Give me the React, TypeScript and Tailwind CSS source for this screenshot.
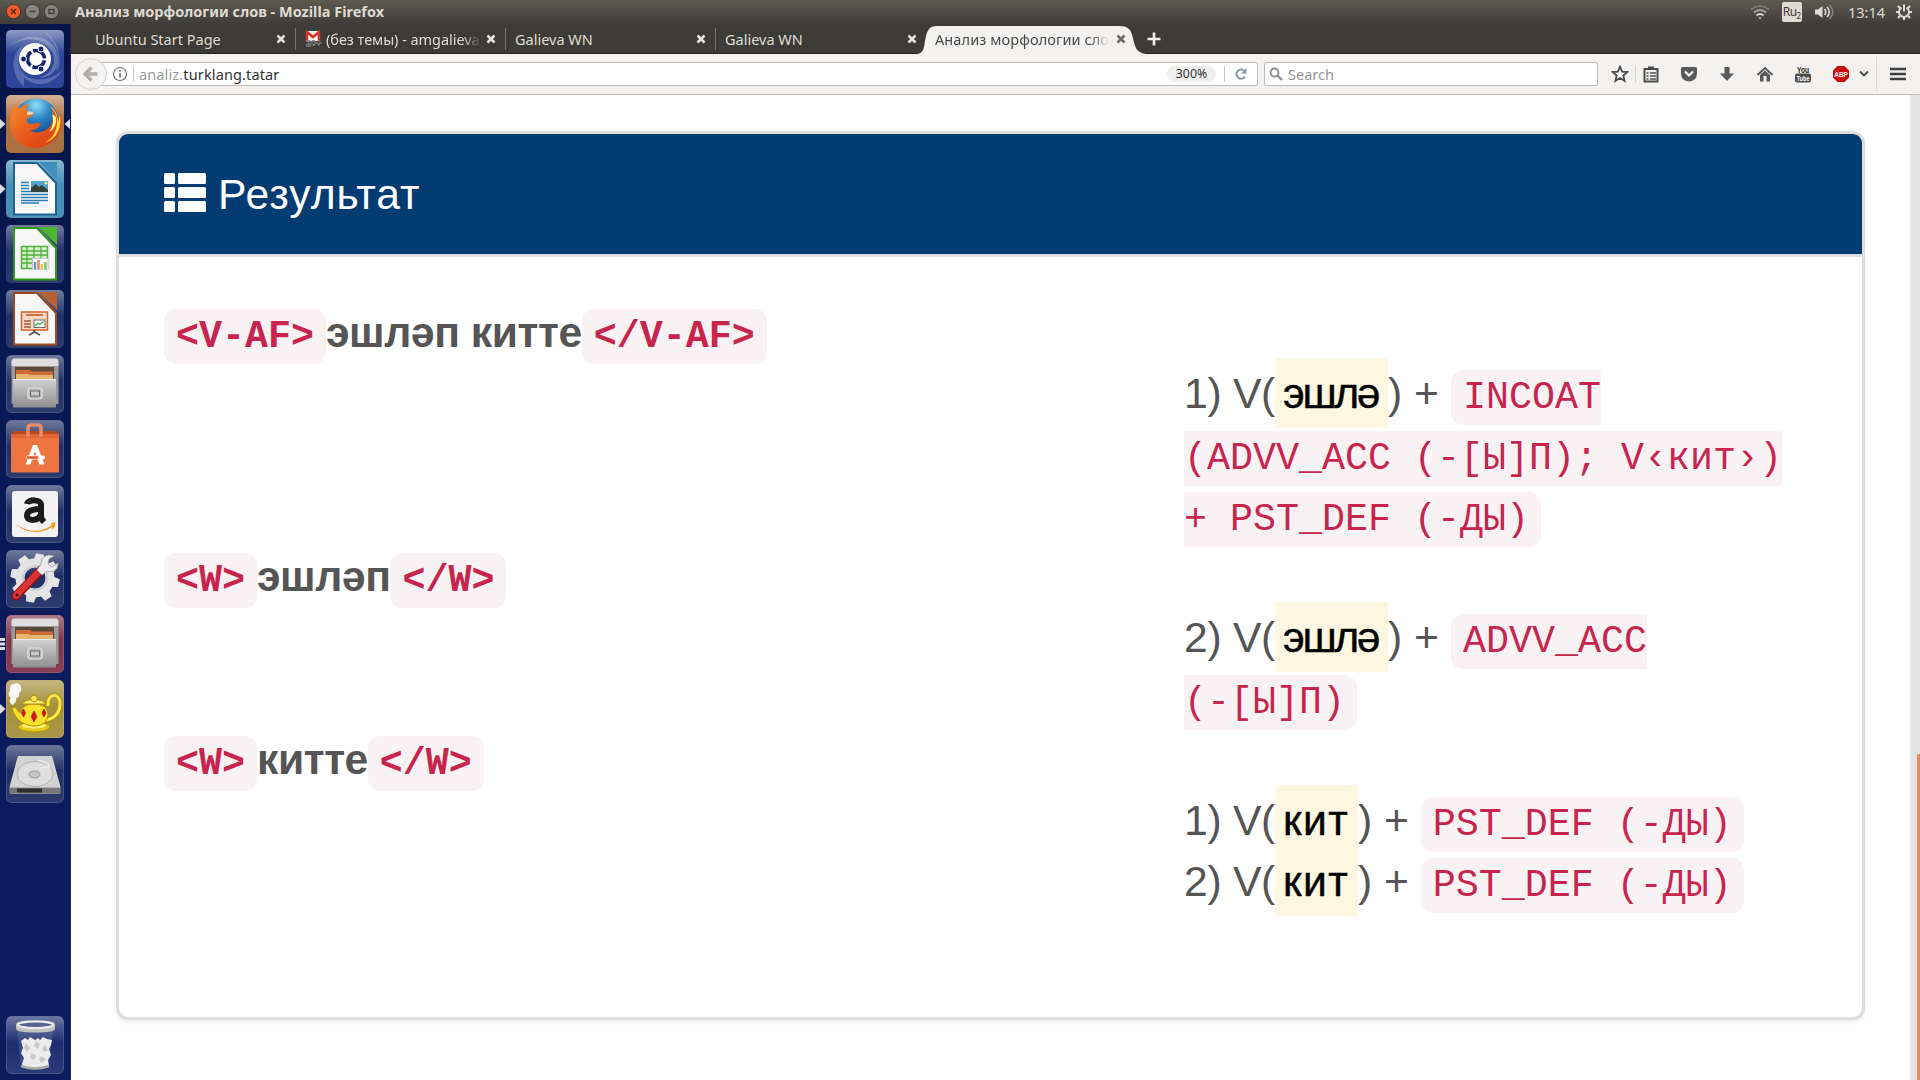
import React from "react";

function Star() {
  return (
    <svg width="18" height="18" viewBox="0 0 18 18" className="shrink-0">
      <path d="M9 1.6l2.1 5 5.3.4-4.1 3.5 1.3 5.3L9 13l-4.6 2.8 1.3-5.3L1.600 7l5.300-.4z" fill="none" stroke="#4c4c4c" strokeWidth="1.8" />
    </svg>
  );
}

function DashIcon() {
  return (
    <svg viewBox="0 0 58 58" className="size-full">
      <defs>
        <linearGradient id="dash" x1="0" y1="0" x2="0" y2="1">
          <stop offset="0" stopColor="#8f9ac4" />
          <stop offset=".4" stopColor="#2d4597" />
          <stop offset="1" stopColor="#2c469c" />
        </linearGradient>
      </defs>
      <rect width="58" height="58" rx="5" fill="url(#dash)" />
      <path d="M2 17C20 4 40 8 47 24c4 12-4 22-16 24C48 48 56 36 50 20 44 6 22 0 2 17z" fill="#fff" opacity=".25" />
      <path d="M18 57C4 44 4 24 18 15 10 26 10 40 22 47c12 5 26 2 35-8C48 56 30 58 18 48z" fill="#fff" opacity=".2" />
      <path d="M39 2c12 10 17 24 12 38" fill="none" stroke="#fff" opacity=".2" strokeWidth="1.500" />
      <circle cx="29" cy="29" r="16" fill="#fff" />
      <circle cx="30" cy="29" r="8.500" fill="none" stroke="#14246b" strokeWidth="3.600" strokeDasharray="15.600 2.200" strokeDashoffset="-1.200" />
      <g fill="#14246b" stroke="#fff" strokeWidth="1">
        <circle cx="17.500" cy="29" r="3" />
        <circle cx="35" cy="19" r="3" />
        <circle cx="35" cy="39" r="3" />
      </g>
    </svg>
  );
}

function FirefoxIcon() {
  return (
    <svg viewBox="0 0 58 58" className="size-full">
      <defs>
        <linearGradient id="fxbg" x1="0" y1="0" x2="0" y2="1">
          <stop offset="0" stopColor="#d6b197" />
          <stop offset=".4" stopColor="#b07448" />
          <stop offset="1" stopColor="#a9703f" />
        </linearGradient>
        <radialGradient id="globe" cx=".5" cy=".15" r=".8">
          <stop offset="0" stopColor="#8fe0f5" />
          <stop offset=".4" stopColor="#2b84c4" />
          <stop offset="1" stopColor="#0f3a78" />
        </radialGradient>
        <linearGradient id="fox" x1="0" y1="0" x2="1" y2="1">
          <stop offset="0" stopColor="#f58a2c" />
          <stop offset=".5" stopColor="#ea5a1c" />
          <stop offset="1" stopColor="#d8380f" />
        </linearGradient>
      </defs>
      <rect width="58" height="58" rx="5" fill="url(#fxbg)" />
      <circle cx="30" cy="26" r="22.500" fill="url(#globe)" />
      <path d="M7 13c0-2 .5-3 1-4 1 2 3 4 6 4 3-3 6-4 9-4-2 2-3 4-2 7 2 1 5 1 7 2-1 3-5 4-7 6-1 3 1 5 4 5 4 0 6-3 10 0-3 5-7 7-12 6 8 5 19 2 23-7 2-6 1-11-2-17 5 4 8 10 8 17 3-4 2-10-1-15 6 8 6 21 0 29C45 50 36 53 28 53 14 52 4 42 4 29c0-6 1-12 3-16z" fill="url(#fox)" />
      <path d="M44 11c5 5 8 11 7 18-1 9-6 16-13 19 13-3 18-16 16-28-1 3-1 5-2 7 0-7-3-13-8-16z" fill="#fbdc3c" />
      <path d="M46 19c2 6 1 13-3 18 5-2 8-8 7-15z" fill="#fff08a" />
      <path d="M21 17c3-1 5 0 7 1-2 2-4 2-7 2z" fill="#f9d7b5" />
    </svg>
  );
}

function DocIcon({ kind }: { kind: "writer" | "calc" | "impress" }) {
  const c =
    kind === "writer"
      ? { bg: "#3c86b0", edge: "#1c6493", tri: "#3f8fbf" }
      : kind === "calc"
        ? { bg: "#16265f", edge: "#2f9a17", tri: "#4cb82e" }
        : { bg: "#16265f", edge: "#a0491b", tri: "#b8622f" };
  return (
    <svg viewBox="0 0 58 58" className="size-full">
      <defs>
        <linearGradient id={"doc" + kind} x1="0" y1="0" x2="0" y2="1">
          <stop offset="0" stopColor="#fff" stopOpacity=".4" />
          <stop offset=".45" stopColor="#fff" stopOpacity=".05" />
          <stop offset="1" stopColor="#fff" stopOpacity=".1" />
        </linearGradient>
      </defs>
      <rect width="58" height="58" rx="5" fill={c.bg} />
      <rect width="58" height="58" rx="5" fill={"url(#doc" + kind + ")"} />
      <path d="M33 2h18v18z" fill={c.tri} />
      <path d="M8 3h23l19 20v31.500H8z" fill="#f7f7f7" stroke={c.edge} strokeWidth="2" />
      {kind === "writer" && (
        <g>
          <path d="M15 22.500h8M15 25.500h8M15 28.500h8M15 31.500h27M15 34.500h27M15 37.500h27M15 40.500h27M15 43h18" stroke="#2a7fb5" strokeWidth="1.500" />
          <rect x="25" y="21" width="17" height="11" fill="#4fa3d3" />
          <path d="M25 32v-4l5-4 3 3 3-2 6 5v2z" fill="#34443a" />
          <circle cx="40" cy="23" r="1.500" fill="#ffe36e" />
        </g>
      )}
      {kind === "calc" && (
        <g>
          <rect x="15.500" y="21.500" width="26" height="22" fill="#d8f0cf" stroke="#4fb13a" strokeWidth="1.500" />
          <path d="M15 26h26M15 30h26M15 34h26M15 38h26M21 21v22M28 21v22M35 21v22" stroke="#4fb13a" strokeWidth="1.300" />
          <rect x="26.500" y="33.500" width="15.500" height="11" fill="#fff" stroke="#c9c9c9" />
          <path d="M29 44v-7" stroke="#5b9bd5" strokeWidth="2.500" />
          <path d="M32.500 44v-9" stroke="#e58b5a" strokeWidth="2.500" />
          <path d="M36 44v-5" stroke="#f3c63a" strokeWidth="2.500" />
          <path d="M39.500 44v-7" stroke="#7cc36a" strokeWidth="2.500" />
        </g>
      )}
      {kind === "impress" && (
        <g>
          <rect x="15.500" y="22" width="26" height="18" fill="#fbd8c2" stroke="#d2622f" strokeWidth="1.500" />
          <path d="M20 25h17" stroke="#c5501c" strokeWidth="1.500" />
          <path d="M18 31h7M18 34h7M18 37h7" stroke="#a35b3a" strokeWidth="1.500" />
          <rect x="28" y="30" width="11" height="7.500" fill="#fff" stroke="#6a6a6a" />
          <path d="M29 36l3-3 2 1.500 3.500-3" stroke="#3bae49" strokeWidth="1.300" fill="none" />
          <path d="M28.500 40v2M23 45l5.500-3 5.500 3" stroke="#555" strokeWidth="1.800" fill="none" />
        </g>
      )}
    </svg>
  );
}

function Glass({ id, base }: { id: string; base: string }) {
  return (
    <>
      <defs>
        <linearGradient id={id} x1="0" y1="0" x2="0" y2="1">
          <stop offset="0" stopColor="#fff" stopOpacity=".38" />
          <stop offset=".45" stopColor="#fff" stopOpacity=".04" />
          <stop offset="1" stopColor="#fff" stopOpacity=".1" />
        </linearGradient>
      </defs>
      <rect width="58" height="58" rx="5" fill={base} />
      <rect x=".5" y=".5" width="57" height="57" rx="5" fill={"url(#" + id + ")"} stroke="#fff" strokeOpacity=".18" />
    </>
  );
}

function FilesIcon({ id, base }: { id: string; base: string }) {
  return (
    <svg viewBox="0 0 58 58" className="size-full">
      <Glass id={id} base={base} />
      <defs>
        <linearGradient id={id + "d"} x1="0" y1="0" x2="0" y2="1">
          <stop offset="0" stopColor="#d2d2d2" />
          <stop offset="1" stopColor="#8f8f8f" />
        </linearGradient>
      </defs>
      <path d="M5.500 7q0-3.500 3-3.500h41q3 0 3 3.500v42h-47z" fill="#9a9a9a" />
      <path d="M5.500 11V7q0-3.500 3-3.500h41q3 0 3 3.500v4z" fill="#dedede" />
      <rect x="9" y="12" width="39" height="13" fill="#5b4a3c" />
      <path d="M10 15h14l2 1.500h21V25H10z" fill="#cf6a34" />
      <path d="M10 19h12l2 1h23v5H10z" fill="#e8b673" />
      <rect x="7" y="24" width="43" height="28.500" rx="1" fill={"url(#" + id + "d)"} />
      <path d="M7 24.500h43" stroke="#e8e8e8" />
      <rect x="22" y="33" width="14" height="11" rx="3" fill="#b7b7b7" stroke="#e6e6e6" strokeWidth="1.200" />
      <rect x="24.500" y="36" width="9" height="5" fill="#c9c9c9" stroke="#6c6c6c" />
    </svg>
  );
}

function SoftwareIcon() {
  return (
    <svg viewBox="0 0 58 58" className="size-full">
      <Glass id="soft" base="#16265f" />
      <path d="M5 14l3-3h42l3 3z" fill="#b84a20" />
      <rect x="5" y="14" width="48" height="38.500" rx="1" fill="#ee7440" />
      <path d="M5 14h48v4H5z" fill="#e0653a" />
      <path d="M22 17V8q0-3 3-3h7q3 0 3 3v9" fill="none" stroke="#e98a68" strokeWidth="3.600" />
      <path d="M19.500 44.500L27 25h4l7.500 19.500h-5L29 31.500l-4.500 13z" fill="#fff" />
      <rect x="20" y="35.500" width="19" height="4" rx="2" fill="#fff" />
      <rect x="20.500" y="36.300" width="12" height="2.400" rx="1" fill="#e0532a" />
    </svg>
  );
}

function AmazonIcon() {
  return (
    <svg viewBox="0 0 58 58" className="size-full">
      <Glass id="amz" base="#16265f" />
      <rect x="6" y="6" width="46" height="46" rx="3" fill="#f3f3f3" />
      <g fill="none" stroke="#1b1b1b" strokeWidth="6">
        <path d="M21 19c1-5 14-5 14 1v11c0 3 1 4 3 6" />
        <path d="M35 24c-8 0-14 1-14 6.500 0 6.500 12 5.500 14-1" />
      </g>
      <path d="M9 38c12 10 26 10 37 2l-1-2 4.500-1c0 3-1 6-3 8l-.5-3C34 50 18 48 9 38z" fill="#f79a1c" />
    </svg>
  );
}

const teeth = [0, 45, 90, 135, 180, 225, 270, 315];

function SettingsIcon() {
  return (
    <svg viewBox="0 0 58 58" className="size-full">
      <Glass id="cog" base="#16265f" />
      <g fill="#e4e4e4">
        {teeth.map((a) => (
          <path key={a} d="M23.500 12L25 3.500h8L34.500 12z" transform={"rotate(" + (a + 12) + " 29 28)"} />
        ))}
      </g>
      <circle cx="29" cy="28" r="15" fill="none" stroke="#e4e4e4" strokeWidth="9" />
      <circle cx="29" cy="28" r="12" fill="none" stroke="#cfcfcf" strokeWidth="2" />
      <path d="M10 46L35 20" stroke="#8d1212" strokeWidth="9" strokeLinecap="round" />
      <path d="M10 45.500L34 20.500" stroke="#dc3434" strokeWidth="6.500" strokeLinecap="round" />
      <path d="M31 20l5 5 5-4c5 2 11-1 11-8l-6 4-4-3 1-5 5-3c-8-3-13 2-13 8z" fill="#ececec" stroke="#9c9c9c" strokeWidth=".8" />
      <circle cx="11" cy="45" r="1.500" fill="#5c0b0b" />
    </svg>
  );
}

function TeapotIcon() {
  return (
    <svg viewBox="0 0 58 58" className="size-full">
      <Glass id="tea" base="#a08c35" />
      <path d="M7 25c-4-2-4-5-2-7-3-2-3-5-1-7-1-4 1-7 4-7 3-2 7 0 7 4 1 3-1 4-2 5 1 3-1 5-3 5 1 3-1 5-3 7z" fill="#fff" opacity=".93" />
      <ellipse cx="28" cy="47" rx="16" ry="5" fill="#e6c81d" stroke="#b38f07" />
      <ellipse cx="28" cy="45.500" rx="12" ry="3" fill="#fff27a" />
      <path d="M42 26c-1-14 12-13 12-3 0 8-3 15-14 17" fill="none" stroke="#b38f07" strokeWidth="4.500" />
      <path d="M42 26c-1-14 12-13 12-3 0 8-3 15-14 17" fill="none" stroke="#fbe84a" strokeWidth="3" />
      <path d="M6 28l4-1c1 4 3 5 5 6 0-5 4-9 13-9s14 4 14 10c0 8-6 12-14 12-8 0-19-5-22-18z" fill="#f9e02a" stroke="#b38f07" />
      <path d="M16 24c3-6 21-6 24 0z" fill="#fff07a" stroke="#b38f07" />
      <circle cx="28" cy="18.500" r="3.300" fill="#fbe84a" stroke="#b38f07" />
      <g fill="#d4161f" stroke="#8e0c12" strokeWidth=".6">
        <path d="M28 31l2.800 5.500L28 42l-2.800-5.500z" />
        <path d="M17.500 29l2 4-2 4-2-4z" />
        <path d="M38 29l2 4-2 4-2-4z" />
      </g>
    </svg>
  );
}

function DiskIcon() {
  return (
    <svg viewBox="0 0 58 58" className="size-full">
      <Glass id="disk" base="#16265f" />
      <path d="M12 11h34l8.500 31v5.500q0 1.500-2 1.500h-47q-2 0-2-1.500V42z" fill="#8b8b8b" />
      <path d="M12 11h34l8.500 31.500h-51z" fill="#d3d3d3" />
      <ellipse cx="29" cy="29" rx="18" ry="12.500" fill="#dedede" stroke="#b0b0b0" />
      <path d="M32 15c8 2 12 5 11 8-3-2-7-1-9 2" fill="none" stroke="#efefef" strokeWidth="1.500" />
      <ellipse cx="28.500" cy="29.500" rx="5.500" ry="3.500" fill="#c4c4c4" stroke="#909090" />
      <path d="M4 43h50v5H4z" fill="#777" />
      <path d="M11 43.500h25v4H11z" fill="#2d2d2d" />
    </svg>
  );
}

function TrashIcon() {
  return (
    <svg viewBox="0 0 58 58" className="size-full">
      <Glass id="bin" base="#13256b" />
      <path d="M11 14h36l-4 36q-14 5-28 0z" fill="#9aa4c8" opacity=".2" />
      <path d="M15 25l4-3 3 2 2-3 5 3 3-2 2 2 3-3 4 2 5 1-1 5-2 4 2 6-3 5 1 7q-13 4-25 0l-2-3 2-6-3-5 2-5z" fill="#ececec" />
      <g fill="#c9c9c4">
        <path d="M20 27l4 5-3 4-3-4zM30 25l4 3-2 5-4-3zM39 29l3 5-4 2-2-4zM25 37l5 2-2 5-4-2zM35 40l5 3-4 4-3-3z" />
      </g>
      <path d="M15 50q14 5 28 0" fill="none" stroke="#a9ada4" strokeWidth="2.500" />
      <path d="M10 8.500q0-4 19.500-4T49 8.500v4q0 4-19.500 4T10 12.500z" fill="#c4c4bf" />
      <ellipse cx="29.500" cy="8.700" rx="17.500" ry="3.200" fill="#55618f" stroke="#ececea" strokeWidth="2" />
    </svg>
  );
}

function Marker({ side }: { side: "left" | "right" }) {
  return side === "left" ? (
    <svg width="6" height="10" viewBox="0 0 6 10" className="absolute top-6 -left-1.5">
      <path d="M0 0l5.500 5L0 10z" fill="#dcdcdc" />
    </svg>
  ) : (
    <svg width="6" height="10" viewBox="0 0 6 10" className="absolute top-6 -right-1.5">
      <path d="M6 0L.5 5 6 10z" fill="#dcdcdc" />
    </svg>
  );
}

function Tile({ children }: { children: React.ReactNode }) {
  return <div className="relative size-[58px] shrink-0">{children}</div>;
}

function Launcher() {
  return (
    <aside className="flex w-[71px] shrink-0 flex-col gap-[7px] border-r border-[#2b2350] bg-linear-to-b from-[#061548] to-[#0b1b5d] to-60% pt-1.5 pb-1.5 pl-1.5">
      <Tile><DashIcon /></Tile>
      <Tile><FirefoxIcon /><Marker side="left" /><Marker side="right" /></Tile>
      <Tile><DocIcon kind="writer" /><Marker side="left" /></Tile>
      <Tile><DocIcon kind="calc" /></Tile>
      <Tile><DocIcon kind="impress" /></Tile>
      <Tile><FilesIcon id="files1" base="#16265f" /></Tile>
      <Tile><SoftwareIcon /></Tile>
      <Tile><AmazonIcon /></Tile>
      <Tile><SettingsIcon /></Tile>
      <Tile>
        <FilesIcon id="files2" base="#7a2a42" />
        <svg width="5" height="12" viewBox="0 0 5 12" className="absolute top-[23px] -left-1.5">
          <path d="M0 1.500h5M0 6h5M0 10.500h5" stroke="#dcdcdc" strokeWidth="2.800" />
        </svg>
      </Tile>
      <Tile><TeapotIcon /><Marker side="left" /></Tile>
      <Tile><DiskIcon /></Tile>
      <div className="mt-auto size-[58px]"><TrashIcon /></div>
    </aside>
  );
}

function TopBar() {
  return (
    <header className="flex h-6 shrink-0 items-center bg-linear-to-b from-[#5d5a50] to-[#3e3d39] pl-[5px] text-[14.5px] leading-none text-[#dfdbd2]">
      <svg width="56" height="24" viewBox="0 0 56 24">
        <circle cx="8.500" cy="11.500" r="7.200" fill="#ea5a2c" stroke="#3a2a22" strokeWidth=".8" />
        <path d="M6 9l5 5M11 9l-5 5" stroke="#5a2413" strokeWidth="1.400" />
        <circle cx="27.500" cy="11.500" r="7.200" fill="#85837b" stroke="#33322e" strokeWidth=".8" />
        <path d="M24.500 11.500h6" stroke="#3b3a36" strokeWidth="1.400" />
        <circle cx="46.500" cy="11.500" r="7.200" fill="#85837b" stroke="#33322e" strokeWidth=".8" />
        <rect x="44" y="9.500" width="5" height="4" fill="none" stroke="#3b3a36" strokeWidth="1.300" />
      </svg>
      <span className="ml-3.5 pb-px font-bold whitespace-pre">Анализ морфологии слов - Mozilla Firefox</span>
      <svg width="22" height="20" viewBox="0 0 22 20" className="ml-auto shrink-0" fill="none" strokeWidth="1.700">
        <path d="M2 7.500q9-7 18 0" stroke="#85827a" />
        <path d="M4.800 10.500q6.200-5 12.400 0" stroke="#aaa79f" />
        <path d="M7.500 13.500q3.500-3 7 0" stroke="#dfdbd2" />
        <path d="M9.500 15.500h3L11 17.500z" fill="#dfdbd2" />
      </svg>
      <div className="ml-[11px] flex h-5 w-5 items-center justify-center rounded-[2px] bg-[#dfdbd2] text-[#3c3b37]">
        <span className="text-[12px] tracking-[-0.5px]">Ru</span>
        <span className="pt-2 text-[8px]">2</span>
      </div>
      <svg width="22" height="20" viewBox="0 0 22 20" className="ml-3 shrink-0" fill="none" strokeWidth="1.600">
        <path d="M1 7.500h3L8.500 4v12L4 12.500H1z" fill="#dfdbd2" />
        <path d="M10.500 7q2.500 3 0 6" stroke="#dfdbd2" />
        <path d="M13 5q4.500 5 0 10" stroke="#dfdbd2" />
        <path d="M15.500 3q6.500 7 0 14" stroke="#85827a" />
      </svg>
      <span className="ml-3">13:14</span>
      <svg width="18" height="18" viewBox="0 0 18 18" className="mr-[7px] ml-[10px] shrink-0" fill="none" stroke="#dfdbd2">
        <path d="M6.500 4.600a5 5 0 1 0 5 0" strokeWidth="2" />
        <path d="M9 1.500v7" strokeWidth="2" />
        <path d="M4 9H1M17 9h-3M5 5L3 3M13 5l2-2M5 13l-2 2M13 13l2 2M9 14v3" strokeWidth="2.200" />
      </svg>
    </header>
  );
}

function Close({ dark }: { dark?: boolean }) {
  return (
    <svg width="10" height="10" viewBox="0 0 10 10" className="ml-auto shrink-0">
      <path d="M1.500 1.500l7 7M8.500 1.500l-7 7" stroke={dark ? "#6b6964" : "#e6e4df"} strokeWidth="2.500" />
    </svg>
  );
}

function Tab({ title, first, last, mail }: { title: string; first?: boolean; last?: boolean; mail?: boolean }) {
  return (
    <div
      className={
        "flex h-[22px] shrink-0 items-center pr-[9px] " +
        (first ? "w-[225px] pl-6 " : "w-[210px] pl-[9px] ") +
        (last ? "" : "border-r border-[#77756d]")
      }
    >
      {mail && (
        <svg width="17" height="17" viewBox="0 0 17 17" className="mr-1 shrink-0">
          <rect x="1" y="1" width="14" height="10" fill="#f3f3f3" />
          <path d="M2 11V2l6 5 6-5v9" fill="none" stroke="#d8342c" strokeWidth="2.600" />
          <text x="1" y="15.500" fontSize="9" fontWeight="700" fontFamily="Liberation Sans, sans-serif" fill="#111" stroke="#eee" strokeWidth=".3">20+</text>
        </svg>
      )}
      <span
        className={
          mail
            ? "w-[155px] overflow-hidden mask-r-from-88% mask-r-to-100% tracking-[-0.05px] whitespace-nowrap"
            : "whitespace-nowrap"
        }
      >
        {title}
      </span>
      <Close />
    </div>
  );
}

function TabStrip() {
  return (
    <div className="flex h-[30px] shrink-0 items-center border-b border-[#252422] bg-[#3d3b37] text-[14.500px] leading-5 text-[#dfdbd2]">
      <Tab title="Ubuntu Start Page" first />
      <Tab title="(без темы) - amgalieva" mail />
      <Tab title="Galieva WN" />
      <Tab title="Galieva WN" last />
      <div className="relative -ml-[10px] flex h-[30px] w-[233px] shrink-0 items-center pr-[23px] pl-[19px] text-[#4a4a4a]">
        <svg width="233" height="29" viewBox="0 0 233 29" className="absolute top-px left-0">
          <path d="M0 29c8 0 8-7 9-13C11 5 13 1 21 1h182c9 0 12 3 14 12 2 9 3 16 16 16z" fill="#f3f2f1" />
        </svg>
        <span className="relative w-[174px] overflow-hidden mask-r-from-90% mask-r-to-100% tracking-[0.1px] whitespace-nowrap">
          Анализ морфологии сло
        </span>
        <span className="relative ml-auto"><Close dark /></span>
      </div>
      <svg width="14" height="14" viewBox="0 0 14 14" className="-ml-0.5">
        <path d="M7 .5v13M.5 7h13" stroke="#f3f2f1" strokeWidth="2.600" />
      </svg>
    </div>
  );
}

function NavBar() {
  return (
    <div className="flex h-[41px] shrink-0 items-center border-b border-[#c1bfbc] bg-[#f3f2f1] pl-1 text-[14.500px] leading-5">
      <div className="relative z-10 flex size-8 shrink-0 items-center justify-center rounded-full border border-[#d4d2cf] bg-[#f3f2f1]">
        <svg width="16" height="16" viewBox="0 0 16 16">
          <path d="M8.500 1.500L2 8l6.500 6.500M2.500 8h12" fill="none" stroke="#b0aeab" strokeWidth="3.400" />
        </svg>
      </div>
      <div className="-ml-3 flex h-6 w-[1163px] shrink-0 items-center rounded-[2px] border border-[#bcbab6] bg-white pl-4">
        <svg width="16" height="16" viewBox="0 0 16 16" className="shrink-0">
          <circle cx="8" cy="8" r="6.500" fill="none" stroke="#757575" strokeWidth="1.200" />
          <path d="M8 7v4.500M8 4v1.700" stroke="#757575" strokeWidth="1.600" />
        </svg>
        <div className="ml-[5px] h-4 w-px bg-[#c9c9c9]" />
        <span className="ml-[5px] tracking-[0.130px] whitespace-nowrap text-[#9a9a9a]">
          analiz.<span className="text-[#333]">turklang.tatar</span>
        </span>
        <span className="ml-auto flex h-4 w-[49px] items-center justify-center rounded-full bg-[#efefee] text-[12.300px] text-[#333]">300%</span>
        <div className="ml-2 h-4 w-px bg-[#c9c9c9]" />
        <svg width="14" height="14" viewBox="0 0 14 14" className="mr-[9px] ml-[9px] shrink-0">
          <path d="M11 9.500A4.600 4.600 0 1 1 10 3.600" fill="none" stroke="#8d99a5" strokeWidth="2" />
          <path d="M12.500 1v5.500H7z" fill="#8d99a5" />
        </svg>
      </div>
      <div className="ml-1.5 flex h-6 w-[334px] shrink-0 items-center rounded-[2px] border border-[#bcbab6] bg-white pl-1 text-[#959595]">
        <svg width="14" height="14" viewBox="0 0 14 14">
          <circle cx="5.500" cy="5.500" r="4" fill="none" stroke="#8a8a8a" strokeWidth="1.800" />
          <path d="M8.500 8.500L13 13" stroke="#8a8a8a" strokeWidth="2.400" />
        </svg>
        <span className="ml-[5px]">Search</span>
      </div>
      <div className="ml-[13px] flex items-center"><Star /></div>
      <div className="ml-1.5 h-[18px] w-px bg-[#d5d3d0]" />
      <svg width="16" height="18" viewBox="0 0 16 18" className="ml-[7px]">
        <path d="M1.500 4h13v12.500h-13z" fill="none" stroke="#4c4c4c" strokeWidth="2" />
        <path d="M5 1.500h6V5H5z" fill="#4c4c4c" />
        <path d="M3.500 8h2M7 8h6M3.500 11h2M7 11h6M3.500 14h2M7 14h6" stroke="#4c4c4c" strokeWidth="1.400" />
      </svg>
      <svg width="18" height="16" viewBox="0 0 18 16" className="ml-[21px]">
        <path d="M1 2.500Q1 1 2.500 1h13Q17 1 17 2.500V7q0 8-8 8.500Q1 15 1 7z" fill="#5a5a5a" />
        <path d="M5 5.500l4 4 4-4" fill="none" stroke="#f3f2f1" strokeWidth="2.200" />
      </svg>
      <svg width="16" height="16" viewBox="0 0 16 16" className="ml-[21px]">
        <path d="M5.500 1h5v6.500H15L8 15 1 7.500h4.500z" fill="#5a5a5a" />
      </svg>
      <svg width="18" height="16" viewBox="0 0 18 16" className="ml-[21px]">
        <path d="M1.500 9L9 2l7.500 7" fill="none" stroke="#5a5a5a" strokeWidth="2" />
        <path d="M4 9l5-4.500L14 9v6.500h-3.500V10h-3v5.500H4z" fill="#5a5a5a" />
      </svg>
      <svg width="18" height="18" viewBox="0 0 18 18" className="ml-5 overflow-visible">
        <text x="3" y="7.500" fontSize="8.500" fontWeight="700" textLength="12" lengthAdjust="spacingAndGlyphs" fontFamily="Liberation Sans, sans-serif" fill="#222">You</text>
        <rect x="1" y="8.500" width="16" height="9" rx="2" fill="#4c4c4c" />
        <text x="2.500" y="16" fontSize="8" fontWeight="700" textLength="13" lengthAdjust="spacingAndGlyphs" fontFamily="Liberation Sans, sans-serif" fill="#fff">Tube</text>
      </svg>
      <svg width="18" height="18" viewBox="0 0 18 18" className="ml-5">
        <path d="M5.500 1h7L17 5.500v7L12.500 17h-7L1 12.500v-7z" fill="#cc0a0a" />
        <text x="2.300" y="12" fontSize="8" fontWeight="700" textLength="13.500" lengthAdjust="spacingAndGlyphs" fontFamily="Liberation Sans, sans-serif" fill="#fff">ABP</text>
      </svg>
      <svg width="10" height="8" viewBox="0 0 10 8" className="ml-[9px]">
        <path d="M1 1.500l4 4 4-4" fill="none" stroke="#4c4c4c" strokeWidth="1.800" />
      </svg>
      <div className="ml-[7px] h-[34px] w-px bg-[#dddbd8]" />
      <svg width="18" height="14" viewBox="0 0 18 14" className="ml-[12px]">
        <path d="M1 2h16M1 7h16M1 12h16" stroke="#3f3f3f" strokeWidth="2.600" />
      </svg>
    </div>
  );
}

function Code({ children }: { children: React.ReactNode }) {
  return (
    <code className="rounded-[12px] bg-[#f9f2f4] px-3 pt-1.5 pb-[5px] font-['Liberation_Mono',monospace] text-[38.35px] leading-none text-[#c7254e]">
      {children}
    </code>
  );
}

function Headword({ tag, children }: { tag: string; children: React.ReactNode }) {
  return (
    <div className="font-bold">
      <Code>{"<" + tag + ">"}</Code>
      <span className="tracking-[-0.45px]">{children}</span>
      <Code>{"</" + tag + ">"}</Code>
    </div>
  );
}

function Parse({ n, stem, wide, children }: { n: number; stem: string; wide?: boolean; children: React.ReactNode }) {
  return (
    <div>
      <span className="tracking-[-0.28px]">{n}) V(</span>
      <mark
        className={
          "bg-[#fdf7e2] pt-[11px] pb-[11px] pl-2 leading-none text-black [-webkit-text-stroke:0.4px_black] " +
          (wide ? "pr-[10px] tracking-[-2.400px]" : "pr-[9px] tracking-[1.300px]")
        }
      >
        {stem}
      </mark>
      ) + <Code>{children}</Code>
    </div>
  );
}

function ResultCard() {
  return (
    <section className="mt-9 ml-[45px] h-[889px] w-[1749px] shrink-0 overflow-hidden rounded-[12px] border-3 border-[#ddd] bg-white shadow-[0_3px_3px_rgba(0,0,0,0.05)]">
      <div className="flex h-[123px] items-center border-b-3 border-[#ddd] bg-[#033c73] pl-[45px] text-[42.67px] leading-none text-white">
        <svg width="42" height="40" viewBox="0 0 42 40" className="mb-0.5 shrink-0">
          <g fill="#fff">
            <rect x="0" y="0" width="11" height="11" rx="1.500" />
            <rect x="14" y="0" width="28" height="11" rx="1.500" />
            <rect x="0" y="14" width="11" height="11" rx="1.500" />
            <rect x="14" y="14" width="28" height="11" rx="1.500" />
            <rect x="0" y="28" width="11" height="11" rx="1.500" />
            <rect x="14" y="28" width="28" height="11" rx="1.500" />
          </g>
        </svg>
        <span className="ml-[12px] tracking-[0.95px]">Результат</span>
      </div>
      <div className="p-[45px] text-[42.67px] leading-[61px] text-[#555]">
        <Headword tag="V-AF">эшләп китте</Headword>
        <div className="ml-[1020px]">
          <Parse n={1} stem="эшлә" wide>
            INCOAT (ADVV_ACC (-[Ы]П); V‹кит›) + PST_DEF (-ДЫ)
          </Parse>
        </div>
        <Headword tag="W">эшләп</Headword>
        <div className="ml-[1020px]">
          <Parse n={2} stem="эшлә" wide>
            ADVV_ACC
            <br />
            (-[Ы]П)
          </Parse>
        </div>
        <Headword tag="W">китте</Headword>
        <div className="ml-[1020px]">
          <Parse n={1} stem="кит">PST_DEF (-ДЫ)</Parse>
          <Parse n={2} stem="кит">PST_DEF (-ДЫ)</Parse>
        </div>
      </div>
    </section>
  );
}

export default function App() {
  return (
    <div className="flex h-[1080px] w-[1920px] flex-col overflow-hidden bg-white font-['Noto_Sans',sans-serif]">
      <TopBar />
      <div className="flex min-h-0 flex-1">
        <Launcher />
        <div className="flex min-w-0 flex-1 flex-col">
          <TabStrip />
          <NavBar />
          <main className="flex min-h-0 flex-1 bg-[#fefefe] font-['Liberation_Sans',sans-serif]">
            <ResultCard />
            <div className="ml-auto flex w-[10px] shrink-0 justify-end bg-[#e4e4e4]">
              <div className="mt-[659px] w-[3px] bg-[#f08763]" />
            </div>
          </main>
        </div>
      </div>
    </div>
  );
}
